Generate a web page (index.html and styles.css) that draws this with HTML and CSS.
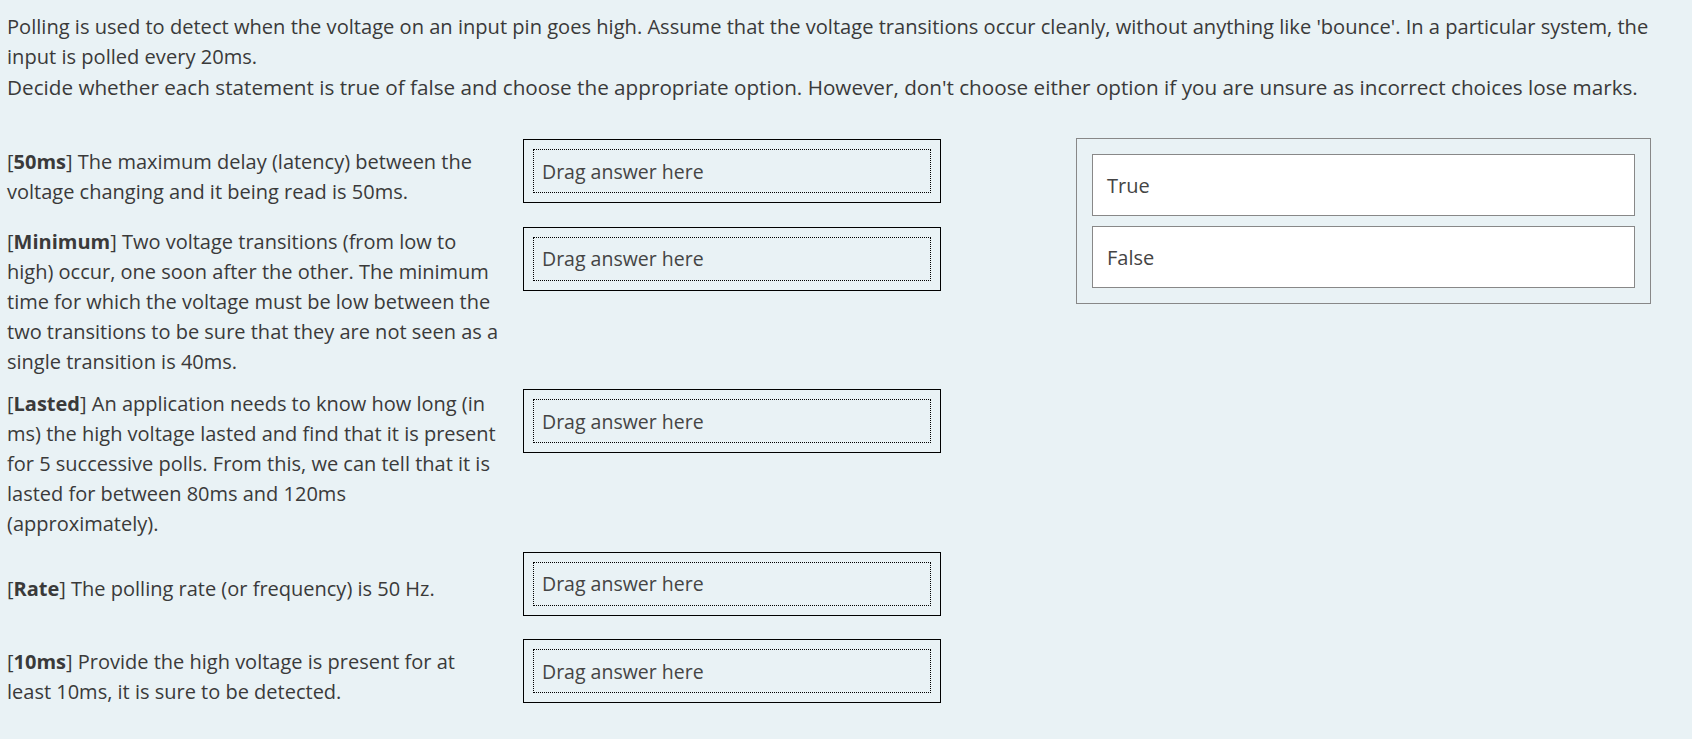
FILE: index.html
```html
<!DOCTYPE html>
<html lang="en">
<head>
<meta charset="utf-8">
<title>Polling question</title>
<link rel="stylesheet" href="styles.css">
</head>
<body>
<div class="page">
  <div class="intro">
    <p class="lead">Polling is used to detect when the voltage on an input pin goes high. Assume that the voltage transitions occur cleanly, without anything like 'bounce'. In a particular system, the input is polled every 20ms.</p>
    <p class="instr">Decide whether each statement is true of false and choose the appropriate option. However, don't choose either option if you are unsure as incorrect choices lose marks.</p>
  </div>
  <div class="main">
    <div class="rows">
      <div class="row">
        <div class="stmt">[<b>50ms</b>] The maximum delay (latency) between the voltage changing and it being read is 50ms.</div>
        <div class="drop"><div class="slot">Drag answer here</div></div>
      </div>
      <div class="row">
        <div class="stmt">[<b>Minimum</b>] Two voltage transitions (from low to high) occur, one soon after the other. The minimum time for which the voltage must be low between the two transitions to be sure that they are not seen as a single transition is 40ms.</div>
        <div class="drop"><div class="slot">Drag answer here</div></div>
      </div>
      <div class="row">
        <div class="stmt">[<b>Lasted</b>] An application needs to know how long (in ms) the high voltage lasted and find that it is present for 5 successive polls. From this, we can tell that it is lasted for between 80ms and 120ms (approximately).</div>
        <div class="drop"><div class="slot">Drag answer here</div></div>
      </div>
      <div class="row">
        <div class="stmt">[<b>Rate</b>] The polling rate (or frequency) is 50 Hz.</div>
        <div class="drop"><div class="slot">Drag answer here</div></div>
      </div>
      <div class="row">
        <div class="stmt">[<b>10ms</b>] Provide the high voltage is present for at least 10ms, it is sure to be detected.</div>
        <div class="drop"><div class="slot">Drag answer here</div></div>
      </div>
    </div>
    <div class="choices">
      <div class="choice">True</div>
      <div class="choice">False</div>
    </div>
  </div>
</div>
</body>
</html>
```

FILE: styles.css
```css
html, body {
  margin: 0;
  padding: 0;
  background: #e9f2f5;
}
body {
  font-family: "Open Sans", "Noto Sans", sans-serif;
  color: #3a3a3a;
}
.page {
  padding: 12px 8px 0 7px;
}
.intro p {
  margin: 0;
  line-height: 30px;
}
.lead {
  font-size: 20.1px;
}
.instr {
  font-size: 20.7px;
}
.main {
  display: flex;
  align-items: flex-start;
  margin-top: 37px;
}
.rows {
  display: flex;
  flex-direction: column;
  gap: 12.5px;
  width: 934px;
}
.row {
  display: flex;
  align-items: flex-start;
  gap: 23px;
}
.stmt {
  width: 493px;
  font-size: 20px;
  line-height: 30px;
  align-self: center;
}
.stmt b {
  font-weight: 700;
}
.drop {
  width: 398px;
  border: 1px solid #000;
  padding: 9px;
  margin-bottom: 11px;
}
.slot {
  height: 42px;
  border: 1px dotted #000;
  display: flex;
  align-items: center;
  padding-left: 8px;
  font-size: 19.5px;
  color: #444;
}
.choices {
  margin-left: 135px;
  margin-top: -1px;
  width: 543px;
  border: 1px solid #888;
  padding: 15px;
  display: flex;
  flex-direction: column;
  gap: 10px;
}
.choice {
  height: 60px;
  background: #fff;
  border: 1px solid #888;
  display: flex;
  align-items: center;
  padding-left: 14px;
  font-size: 20px;
  color: #444;
}
```
